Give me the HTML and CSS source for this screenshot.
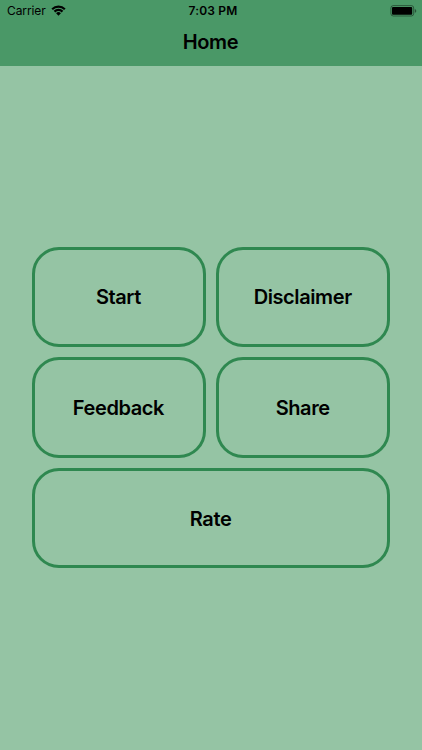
FILE: index.html
```html
<!DOCTYPE html>
<html lang="en">
<head>
<meta charset="utf-8">
<title>Home</title>
<link rel="stylesheet" href="styles.css">
</head>
<body>
<header class="header">
  <div class="status">
    <div class="carrier"><span class="carrier-name">Carrier</span>
      <svg class="wifi" viewBox="0 0 15 11" width="15" height="11"><path d="M.4 3.4A10.2 10.2 0 0 1 14.6 3.4L13.1 5A8.1 8.1 0 0 0 1.9 5ZM2.7 5.8A6.9 6.9 0 0 1 12.3 5.8L10.7 7.4A4.7 4.7 0 0 0 4.3 7.4ZM5.1 8.2A3.4 3.4 0 0 1 9.9 8.2L7.5 10.7Z"/></svg>
    </div>
    <div class="time">7:03 PM</div>
    <svg class="battery" viewBox="0 0 27 12" width="27" height="12"><rect x=".9" y=".6" width="22.8" height="10.4" rx="2.4" fill="none" stroke="#000" stroke-opacity=".42"/><rect x="2" y="1.9" width="20.2" height="7.8" rx="1"/><path d="M24.8 4v3.8q1.5-.5 1.5-1.9t-1.5-1.9Z" opacity=".45"/></svg>
  </div>
  <h1 class="title">Home</h1>
</header>
<main class="menu">
  <button class="tile">Start</button>
  <button class="tile">Disclaimer</button>
  <button class="tile">Feedback</button>
  <button class="tile">Share</button>
  <button class="tile wide">Rate</button>
</main>
</body>
</html>
```
FILE: styles.css
```css
* { box-sizing: border-box; }
body { margin: 0; height: 750px; background: #95c4a4; color: #000; font-family: Inter, sans-serif; overflow: hidden; }
.header { height: 66px; background: #4a9867; }
.status { display: grid; grid-template-columns: 1fr auto 1fr; align-items: center; height: 21px; padding: 0 5px 0 7px; }
.carrier { display: flex; align-items: center; gap: 5px; font-size: 12px; letter-spacing: -.1px; }
.time { font-size: 12px; font-weight: 600; letter-spacing: .2px; padding-left: 2px; }
.battery { justify-self: end; }
.title { margin: 0; text-align: center; text-indent: -1px; font-size: 20px; line-height: 42px; font-weight: 600; letter-spacing: -.4px; }
.menu { display: grid; grid-template-columns: 1fr 1fr; grid-auto-rows: 100.6px; gap: 10px; width: 358.5px; margin: 180.7px auto 0; position: relative; left: -.2px; }
.tile { border: 3px solid #2f8850; border-radius: 27px; background: transparent; color: #000; padding: 1px 0 0; font: 600 20px/24px Inter, sans-serif; letter-spacing: -.4px; text-indent: -.5px; }
.wide { grid-column: 1 / -1; }
```
